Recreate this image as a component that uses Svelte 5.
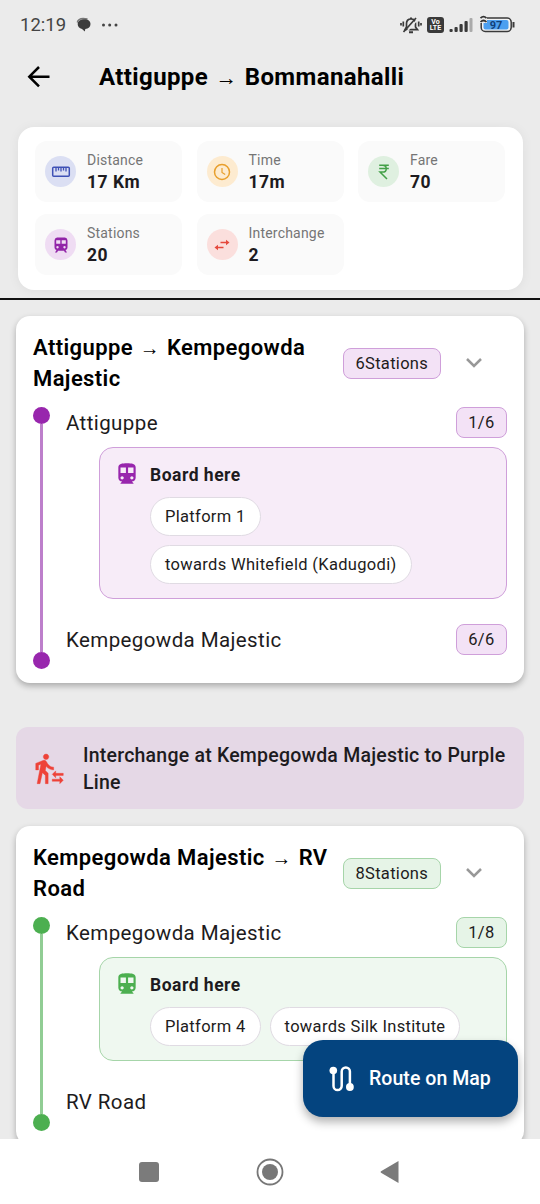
<script>
  const stats = [
    { icon: "ruler", label: "Distance", value: "17 Km", color: "#3f51b5", bg: "#dbdff3" },
    { icon: "clock", label: "Time", value: "17m", color: "#e89f2c", bg: "#fdebd0" },
    { icon: "rupee", label: "Fare", value: "70", color: "#43a047", bg: "#dff0e0" },
    { icon: "train", label: "Stations", value: "20", color: "#9224a8", bg: "#efdcf3" },
    { icon: "swap", label: "Interchange", value: "2", color: "#e5493d", bg: "#fbdfdd" }
  ];

  const legs = [
    {
      line: "purple",
      from: "Attiguppe",
      to: "Kempegowda Majestic",
      count: 6,
      platform: "Platform 1",
      towards: "towards Whitefield (Kadugodi)",
      change: "Interchange at Kempegowda Majestic to Purple Line"
    },
    {
      line: "green",
      from: "Kempegowda Majestic",
      to: "RV Road",
      count: 8,
      platform: "Platform 4",
      towards: "towards Silk Institute"
    }
  ];
</script>

<div class="screen">
  <div class="status">
    <span class="time">12:19</span>
    <svg class="chat" width="16" height="16" viewBox="0 0 16 16">
      <path d="M1.200 5.500C2 2 6 .8 11.500 2" fill="none" stroke="#777" stroke-width="1.300" />
      <path d="M8.500 2.300c3.600 0 6 1.800 6 4.700 0 2.800-2 4.600-5.200 5L8.800 14.600 6 12C3.300 11.200 1.700 9.500 1.700 7.200c0-3 3-4.900 6.800-4.900z" fill="#3c3c3c" />
    </svg>
    <svg class="more" width="18" height="6" viewBox="0 0 18 6" fill="#444">
      <circle cx="2.500" cy="3" r="1.500" /><circle cx="8.700" cy="3" r="1.500" /><circle cx="15" cy="3" r="1.500" />
    </svg>
    <div class="system">
      <svg width="22" height="20" viewBox="0 0 22 20" fill="none" stroke="#3a3a3a" stroke-width="1.700">
        <path d="M5 14.700h12.500L15.500 12V8.500C15.500 5.500 13.500 4 11 4S6.500 5.500 6.500 8.500V12z" />
        <path d="M9 17.300h4M11 2.500V4" stroke-width="2" />
        <path d="M5 18.500L17.500 4.500" stroke="#ebebeb" stroke-width="1.500" />
        <path d="M3.500 17L16 3" />
        <path d="M3.300 6.500v5M1 8v2.500M18.700 6.500v5M21 8v2.500" />
      </svg>
      <span class="volte"><b>Vo</b><b>LTE</b></span>
      <svg width="25" height="16" viewBox="0 0 25 16" fill="#3a3a3a">
        <rect x="0.500" y="12" width="3.200" height="3" rx="1" />
        <rect x="5.500" y="10" width="3.200" height="5" rx="1" />
        <rect x="10.500" y="7" width="3.200" height="8" rx="1" />
        <rect x="15.500" y="4" width="3.200" height="11" rx="1" />
        <rect x="20.500" y="1" width="3" height="14" rx="1" fill="#aaa" />
      </svg>
      <svg width="37" height="20" viewBox="0 0 37 20">
        <rect x="2.200" y="3" width="30" height="13.500" rx="4" fill="#f3f3f3" stroke="#3a3a3a" stroke-width="1.500" />
        <rect x="4.500" y="5" width="25" height="9.500" rx="2" fill="#4c9ff0" />
        <path d="M34.500 7v5.500" stroke="#3a3a3a" stroke-width="2" />
        <path d="M0 0h8v8H0z" fill="#ebebeb" />
        <path d="M1.500 3.200q3-3 6 0M1.500 7q3-3 6 0" fill="none" stroke="#333" stroke-width="1.700" />
        <text x="17" y="13.500" text-anchor="middle" font-size="11" font-weight="700" fill="#123f78">97</text>
      </svg>
    </div>
  </div>

  <header>
    <svg width="24" height="24" viewBox="0 0 24 24" fill="none" stroke="#000" stroke-width="2.500">
      <path d="M22.500 11.700H2.500M12 2l-9.700 9.700L12 21.400" />
    </svg>
    <h1>Attiguppe <span class="arrow">→</span> Bommanahalli</h1>
  </header>

  <section class="summary">
    {#each stats as s}
      <div class="stat">
        <div class="bubble" style="color: {s.color}; background: {s.bg}">
          <svg width="20" height="20" viewBox="0 0 20 20" fill="none" stroke="currentColor" stroke-width="1.500">
            {#if s.icon === "ruler"}
              <rect x="1.700" y="5.200" width="16.600" height="9" rx="1" />
              <path d="M5 5.500v4M7.500 5.500v3M10 5.500v4M12.500 5.500v3M15 5.500v4" stroke-width="1.300" />
            {:else if s.icon === "clock"}
              <circle cx="10" cy="10" r="7.500" />
              <path d="M10 6v4.500l3.200 2" stroke-width="1.200" />
            {:else if s.icon === "rupee"}
              <path d="M5.200 3.200h9.600M5.200 6.600h9.600M5.200 3.200h3.300c5 0 5 6.900 0 6.900H6l7 6.900" />
            {:else if s.icon === "train"}
              <path fill="currentColor" stroke="none" fill-rule="evenodd" d="M6 2.500h8q2.500.3 2.500 3v7q0 2-2 2.500l1.500 2.500h-2L13 15.800H7L6 17.500H4L5.500 15q-2-.5-2-2.500v-7q0-2.700 2.500-3zM5.200 5.200v3.600h4.100V5.200zm5.500 0v3.600h4.100V5.200zM6.500 11a1.200 1.200 0 1 0 .01 0zm7 0a1.200 1.200 0 1 0 .01 0z" />
            {:else}
              <path d="M8.500 7.500H15M11.500 12.500H5" />
              <path d="M14 4.700l3.500 2.800L14 10.300zM6 9.700l-3.500 2.800L6 15.300z" fill="currentColor" stroke="none" />
            {/if}
          </svg>
        </div>
        <div class="info">
          <span>{s.label}</span>
          <strong>{s.value}</strong>
        </div>
      </div>
    {/each}
  </section>

  <main>
    {#each legs as leg}
      <article class="leg {leg.line}">
        <div class="leg-head">
          <h2>{leg.from} <span class="arrow">→</span> {leg.to}</h2>
          <span class="badge">{leg.count}Stations</span>
          <svg class="chevron" width="18" height="12" viewBox="0 0 18 12" fill="none" stroke="#989898" stroke-width="2.500">
            <path d="M2 2l7 7 7-7" />
          </svg>
        </div>
        <div class="leg-body">
          <div class="track"><i></i><b></b><i></i></div>
          <div class="stops">
            <div class="stop">
              <span>{leg.from}</span>
              <span class="badge">1/{leg.count}</span>
            </div>
            <div class="board">
              <svg width="26" height="26" viewBox="0 0 24 24" fill="currentColor">
                <path d="M12 2c-4.420 0-8 .5-8 4v9.500C4 17.430 5.570 19 7.500 19L6 20.500v.5h12v-.5L16.500 19c1.930 0 3.500-1.570 3.500-3.500V6c0-3.500-3.580-4-8-4zM7.500 17c-.83 0-1.500-.67-1.500-1.500S6.670 14 7.500 14s1.500.67 1.500 1.500S8.330 17 7.500 17zm3.500-6H6V6h5v5zm5.500 6c-.83 0-1.500-.67-1.500-1.500s.67-1.500 1.500-1.500 1.500.67 1.500 1.500-.67 1.500-1.500 1.500zm1.500-6h-5V6h5v5z" />
              </svg>
              <div>
                <strong>Board here</strong>
                <div class="chips">
                  <span>{leg.platform}</span>
                  <span>{leg.towards}</span>
                </div>
              </div>
            </div>
            <div class="stop">
              <span>{leg.to}</span>
              <span class="badge">{leg.count}/{leg.count}</span>
            </div>
          </div>
        </div>
      </article>

      {#if leg.change}
        <div class="change">
          <svg width="33" height="33" viewBox="0 0 24 24" fill="#ee4238" stroke="#ee4238" stroke-width="0.300">
            <path d="M16.490 15.500v-1.750L14 16.250l2.490 2.500V17H22v-1.500zm3.020 4.250H14v1.500h5.510V23L22 20.500 19.510 18zM9.500 5.500c1.100 0 2-.9 2-2s-.9-2-2-2-2 .9-2 2 .9 2 2 2zM5.750 8.900L3 23h2.100l1.750-8L9 17v6h2v-7.550L8.950 13.400l.6-3C10.850 12 12.800 13 15 13v-2c-1.850 0-3.450-1-4.350-2.450l-.95-1.600C9.350 6.350 8.700 6 8 6c-.25 0-.5.050-.75.150L2 8.300V13h2V9.650z" />
          </svg>
          <p>{leg.change}</p>
        </div>
      {/if}
    {/each}
  </main>

  <nav>
    <svg width="20" height="20" viewBox="0 0 20 20"><rect width="20" height="20" rx="3" fill="#7b7b7b" /></svg>
    <svg width="28" height="28" viewBox="0 0 28 28">
      <circle cx="14" cy="14" r="12.500" fill="none" stroke="#777" stroke-width="1.800" />
      <circle cx="14" cy="14" r="8" fill="#777" />
    </svg>
    <svg width="20" height="24" viewBox="0 0 20 24"><path d="M18.500 1v22L1 12.700q-1-.7 0-1.400z" fill="#7b7b7b" /></svg>
  </nav>

  <button class="fab">
    <svg width="26" height="26" viewBox="0 0 26 26" fill="none" stroke="#fff" stroke-width="2.500">
      <path d="M4.500 4.500V20a4.100 4.100 0 0 0 8.200 0V5.600a4.100 4.100 0 0 1 8.200 0V21" />
      <circle cx="4.300" cy="4.500" r="3.800" fill="#fff" stroke="none" />
      <circle cx="20.900" cy="21" r="3.900" fill="#fff" stroke="none" />
    </svg>
    Route on Map
  </button>
</div>

<style>
  :global(body) {
    margin: 0;
  }

  .screen {
    position: relative;
    display: flex;
    flex-direction: column;
    width: 540px;
    height: 1204px;
    overflow: hidden;
    background: #ebebeb;
    color: #1d1b20;
    font-family: Roboto, sans-serif;
  }

  svg {
    display: block;
    flex: none;
  }

  .status {
    display: flex;
    align-items: center;
    height: 50px;
    padding: 0 24px 0 20px;
  }

  .time {
    width: 56px;
    font-size: 18.500px;
    color: #444;
  }

  .more {
    margin-left: 9px;
  }

  .system {
    display: flex;
    align-items: center;
    gap: 5px;
    margin-left: auto;
  }

  .volte {
    display: flex;
    flex-direction: column;
    align-items: center;
    justify-content: center;
    width: 17px;
    height: 16px;
    border-radius: 3px;
    background: #3a3a3a;
    color: #fff;
    font-size: 7px;
    line-height: 6.500px;
  }

  header {
    display: flex;
    align-items: center;
    height: 54px;
    padding-left: 27px;
  }

  h1 {
    margin: 0 0 0 48px;
    font-size: 24px;
    font-weight: 700;
    letter-spacing: 0.380px;
    color: #000;
  }

  .arrow {
    display: inline-block;
    margin: 0 1px;
    font-size: 0.9em;
    font-weight: 400;
    line-height: 1;
  }

  .summary {
    display: grid;
    grid-template-columns: repeat(3, 147px);
    gap: 12px 14.500px;
    height: 134px;
    margin: 23px 17.500px 8px;
    padding: 14px 17.500px 15px;
    border-radius: 16px;
    background: #fff;
    box-shadow: 0 1px 12px rgba(0, 0, 0, 0.06);
  }

  .stat {
    display: flex;
    align-items: center;
    gap: 11px;
    padding-left: 10px;
    border-radius: 12px;
    background: #fafafa;
  }

  .bubble {
    display: flex;
    align-items: center;
    justify-content: center;
    width: 31px;
    height: 31px;
    border-radius: 50%;
  }

  .info {
    display: flex;
    flex-direction: column;
  }

  .info span {
    font-size: 14px;
    line-height: 20px;
    letter-spacing: 0.2px;
    color: #757575;
  }

  .info strong {
    font-size: 17.500px;
    font-weight: 700;
    line-height: 24px;
    letter-spacing: 0.5px;
  }

  main {
    flex: 1;
    min-height: 0;
    padding: 16px 16px 0;
    overflow: hidden;
    border-top: 2px solid #111;
  }

  .leg {
    padding: 16px 17px 14px;
    border-radius: 14px;
    background: #fff;
    box-shadow: 0 3px 6px rgba(0, 0, 0, 0.28);
  }

  .purple {
    --main: #9826ad;
    --track: #bd7fcb;
    --edge: #cf9fda;
    --badge: #f3e2f6;
    --fill: #f7ecf8;
  }

  .green {
    --main: #4caf50;
    --track: #91cd94;
    --edge: #a6d5a9;
    --badge: #e6f4e7;
    --fill: #eff8f0;
  }

  .leg-head {
    display: flex;
    align-items: center;
  }

  h2 {
    width: 310px;
    margin: 0;
    font-size: 22px;
    font-weight: 600;
    line-height: 31px;
    letter-spacing: 0.4px;
    color: #000;
  }

  .badge {
    box-sizing: border-box;
    height: 31px;
    padding: 0 11.500px;
    border: 1px solid var(--edge);
    border-radius: 8px;
    background: var(--badge);
    font-size: 16.500px;
    line-height: 30px;
    letter-spacing: 0.3px;
    white-space: nowrap;
  }

  .chevron {
    margin-left: 24px;
  }

  .leg-body {
    display: flex;
    gap: 17px;
    margin-top: 13px;
  }

  .track {
    display: flex;
    flex-direction: column;
    align-items: center;
    width: 16px;
  }

  .track i {
    width: 17px;
    height: 17px;
    border-radius: 50%;
    background: var(--main);
  }

  .track b {
    flex: 1;
    width: 3px;
    background: var(--track);
  }

  .stops {
    flex: 1;
    padding-bottom: 13px;
  }

  .stop {
    display: flex;
    align-items: flex-start;
    justify-content: space-between;
    height: 32px;
    font-size: 20.500px;
    line-height: 32px;
    letter-spacing: 0.4px;
  }

  .board {
    display: flex;
    gap: 10px;
    margin: 8px 0 25px 33px;
    padding: 13px 14px 14px;
    border: 1px solid var(--edge);
    border-radius: 14px;
    background: var(--fill);
  }

  .board svg {
    color: var(--main);
  }

  .board strong {
    display: block;
    font-size: 17.500px;
    font-weight: 700;
    line-height: 28px;
    letter-spacing: 0.5px;
  }

  .chips {
    display: flex;
    flex-wrap: wrap;
    gap: 9px;
    margin-top: 8px;
  }

  .chips span {
    padding: 0 14px;
    border: 1px solid #e0dbe3;
    border-radius: 20px;
    background: #fff;
    font-size: 16.500px;
    line-height: 37px;
    letter-spacing: 0.32px;
  }

  .change {
    display: flex;
    align-items: center;
    gap: 17px;
    height: 82px;
    margin: 44px 0 17px;
    padding: 0 16px 0 17px;
    border-radius: 12px;
    background: #e5d8e6;
  }

  .change p {
    margin: 2px 0 0;
    font-size: 19.500px;
    font-weight: 500;
    line-height: 27.500px;
    letter-spacing: 0.22px;
  }

  nav {
    position: relative;
    display: flex;
    align-items: center;
    justify-content: space-between;
    height: 65px;
    padding: 0 140px 0 139px;
    background: #fff;
  }

  .fab {
    position: absolute;
    right: 22px;
    bottom: 87px;
    display: flex;
    align-items: center;
    gap: 14px;
    width: 215px;
    height: 77px;
    padding: 0 26px;
    border: 0;
    border-radius: 20px;
    background: #04447f;
    box-shadow: 0 5px 10px rgba(0, 0, 0, 0.3);
    color: #fff;
    font-family: inherit;
    font-size: 19.500px;
    font-weight: 500;
    letter-spacing: 0.05px;
    white-space: nowrap;
  }
</style>
